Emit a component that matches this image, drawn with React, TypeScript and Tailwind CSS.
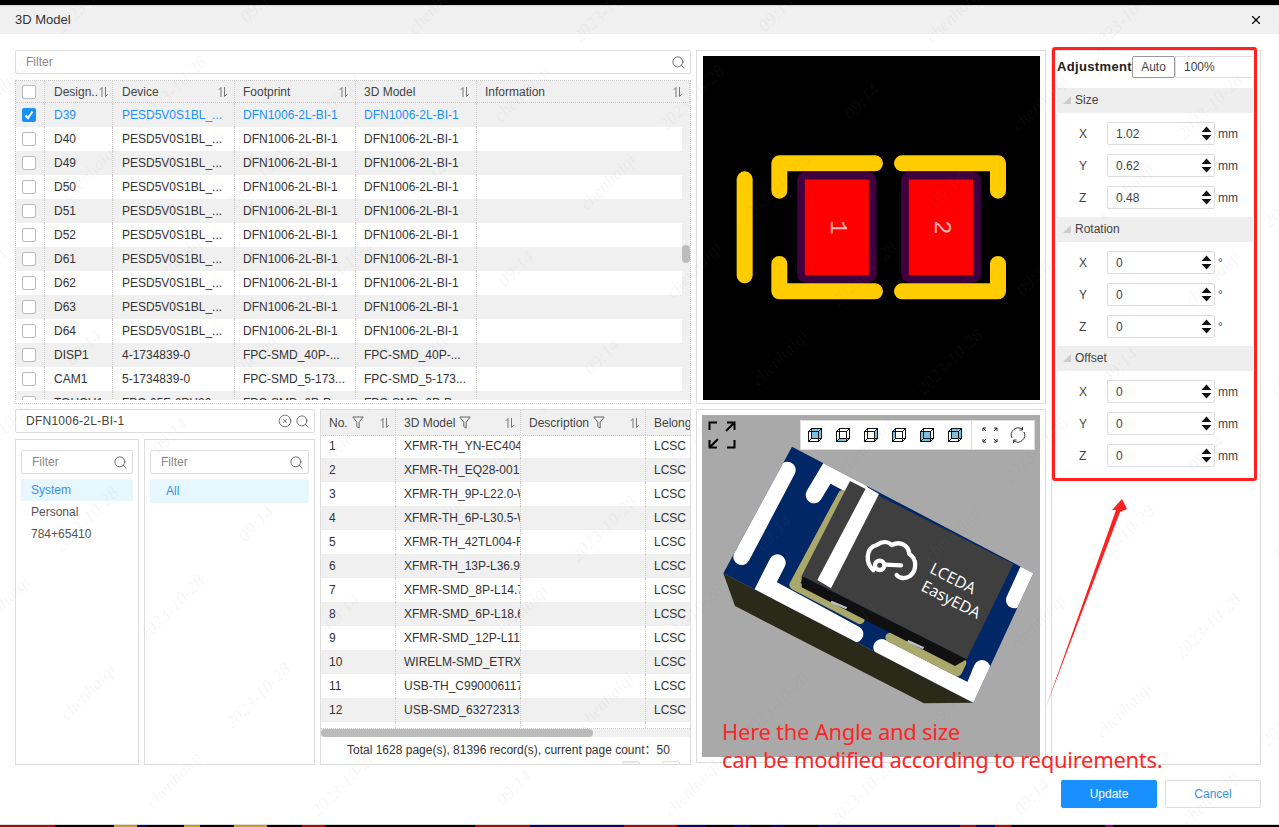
import { Search, X, CircleX } from "lucide-react"

const SYS = "font-['Liberation_Sans','Noto_Sans_CJK_SC',Arial,sans-serif]"

const parts = [
  ["D39", "PESD5V0S1BL_...", "DFN1006-2L-BI-1", "DFN1006-2L-BI-1"],
  ["D40", "PESD5V0S1BL_...", "DFN1006-2L-BI-1", "DFN1006-2L-BI-1"],
  ["D49", "PESD5V0S1BL_...", "DFN1006-2L-BI-1", "DFN1006-2L-BI-1"],
  ["D50", "PESD5V0S1BL_...", "DFN1006-2L-BI-1", "DFN1006-2L-BI-1"],
  ["D51", "PESD5V0S1BL_...", "DFN1006-2L-BI-1", "DFN1006-2L-BI-1"],
  ["D52", "PESD5V0S1BL_...", "DFN1006-2L-BI-1", "DFN1006-2L-BI-1"],
  ["D61", "PESD5V0S1BL_...", "DFN1006-2L-BI-1", "DFN1006-2L-BI-1"],
  ["D62", "PESD5V0S1BL_...", "DFN1006-2L-BI-1", "DFN1006-2L-BI-1"],
  ["D63", "PESD5V0S1BL_...", "DFN1006-2L-BI-1", "DFN1006-2L-BI-1"],
  ["D64", "PESD5V0S1BL_...", "DFN1006-2L-BI-1", "DFN1006-2L-BI-1"],
  ["DISP1", "4-1734839-0", "FPC-SMD_40P-...", "FPC-SMD_40P-..."],
  ["CAM1", "5-1734839-0", "FPC-SMD_5-173...", "FPC-SMD_5-173..."],
  ["TOUCH1", "FPC-05F-6PH20", "FPC-SMD_6P-P...", "FPC-SMD_6P-P..."],
]

const models = [
  "XFMR-TH_YN-EC404",
  "XFMR-TH_EQ28-001",
  "XFMR-TH_9P-L22.0-W",
  "XFMR-TH_6P-L30.5-W",
  "XFMR-TH_42TL004-F",
  "XFMR-TH_13P-L36.9",
  "XFMR-SMD_8P-L14.7",
  "XFMR-SMD_6P-L18.6",
  "XFMR-SMD_12P-L11",
  "WIRELM-SMD_ETRX",
  "USB-TH_C990006117",
  "USB-SMD_63272313",
]

const strip = [
  "w-[55px] bg-[#c00000]",
  "w-[59px] bg-black",
  "w-[23px] bg-[#c9a400]",
  "w-[11px] bg-[#00007a]",
  "w-[36px] bg-black",
  "w-[16px] bg-[#c9a400]",
  "w-[34px] bg-black",
  "w-[33px] bg-[#c9a400]",
  "w-[35px] bg-black",
  "w-[23px] bg-[#c00000]",
  "w-[150px] bg-black",
  "w-[55px] bg-[#c00000]",
  "w-[94px] bg-[#00007a]",
  "w-[53px] bg-[#c00000]",
  "w-[29px] bg-[#00007a]",
  "w-[28px] bg-black",
  "w-[16px] bg-[#00007a]",
  "w-[21px] bg-black",
  "w-[12px] bg-[#00007a]",
  "w-[35px] bg-black",
  "w-[142px] bg-[#00007a]",
  "w-[16px] bg-[#c00000]",
  "w-[19px] bg-[#00007a]",
  "w-[16px] bg-[#c00000]",
  "w-[94px] bg-black",
  "w-[8px] bg-[#7a007a]",
  "flex-1 bg-black",
]

function SortIcon() {
  return (
    <svg width="12" height="12" viewBox="0 0 12 12" className="shrink-0 text-[#777]" fill="none" stroke="currentColor">
      <path d="M4 11V1.5L1.8 3.8" />
      <path d="M7.5 1v9.5l2.2-2.3" />
    </svg>
  )
}

function FunnelIcon() {
  return (
    <svg width="12" height="13" viewBox="0 0 12 13" className="shrink-0 text-[#666]" fill="none" stroke="currentColor">
      <path d="M0.8 1h10.4L7.2 6.2V12L4.8 10.6V6.2z" />
    </svg>
  )
}

function Check({ on }: { on?: boolean }) {
  if (on) {
    return (
      <span className="flex h-[14px] w-[14px] items-center justify-center rounded-[2px] bg-[#1890ff]">
        <svg width="10" height="10" viewBox="0 0 10 10" fill="none" stroke="white" strokeWidth="2">
          <path d="M1.5 5.5l2.4 2.6L8.5 1.5" />
        </svg>
      </span>
    )
  }
  return <span className="block h-[14px] w-[14px] rounded-[2px] border border-[#bbb] bg-white" />
}

function FilterBox() {
  return (
    <div className="flex h-[24px] items-center justify-between rounded-[2px] border border-[#ddd] pl-[10px] pr-[4px] text-[12px] text-[#888]">
      <span>Filter</span>
      <Search size={15} strokeWidth={1.1} className="text-[#333]" />
    </div>
  )
}

function PartsTable() {
  const head = ["Design..", "Device", "Footprint", "3D Model", "Information"]
  const heads = ["w-[68px] pl-[9px]", "w-[122px] pl-[9px]", "w-[121px] pl-[8px]", "w-[121px] pl-[8px]", "flex-1 pl-[8px]"]
  const cols = ["w-[68px] pl-[9px]", "w-[122px] pl-[9px]", "w-[121px] pl-[8px]", "w-[121px] pl-[8px]"]
  return (
    <div className="relative mt-[6px] h-[324px] overflow-hidden border border-dotted border-[#ccc] bg-white">
      <div className="flex h-[22px] border-b border-dotted border-[#ccc] bg-[#f0f0f0]">
        <div className="flex w-[29px] shrink-0 items-center justify-center border-r border-dotted border-[#ccc] pr-[3px]">
          <Check />
        </div>
        {head.map((h, i) => (
          <div key={h} className={`flex ${heads[i]} items-center justify-between border-r border-dotted border-[#ccc] pr-[5px] text-[12px] text-[#444]`}>
            <span>{h}</span>
            <SortIcon />
          </div>
        ))}
      </div>
      <div className="h-[297px] overflow-hidden bg-[#f0f0f0] pr-[8px]">
        {parts.map((row, r) => (
          <div key={row[0]} className={`flex h-[24px] text-[12px] ${r % 2 ? "bg-white" : "bg-[#f0f0f0]"} ${r === 0 ? "text-[#1e90ff]" : "text-[#333]"}`}>
            <div className="flex w-[29px] shrink-0 items-center justify-center border-r border-dotted border-[#ccc] pr-[3px]">
              <Check on={r === 0} />
            </div>
            {row.map((c, i) => (
              <div key={i} className={`flex ${cols[i]} items-center overflow-hidden whitespace-nowrap border-r border-dotted border-[#ccc]`}>
                {c}
              </div>
            ))}
            <div className="flex-1" />
          </div>
        ))}
      </div>
      <div className="absolute right-0 top-[164px] h-[18px] w-[8px] rounded-[4px] bg-[#bdbdbd]" />
    </div>
  )
}

function ModelsTable() {
  const heads: [string, string][] = [
    ["No.", "w-[75px]"],
    ["3D Model", "w-[125px]"],
    ["Description", "w-[125px]"],
  ]
  return (
    <div className="ml-[5px] flex h-full w-[371px] flex-col overflow-hidden border border-[#ddd] bg-white">
      <div className="h-[319px] shrink-0 overflow-hidden border-b border-dotted border-[#ccc]">
        <div className="relative z-10 flex h-[26px] border-b border-dotted border-[#ccc] bg-[#f0f0f0] text-[12px] text-[#444]">
          {heads.map(([h, w]) => (
            <div key={h} className={`flex ${w} shrink-0 items-center border-r border-dotted border-[#ccc] pl-[8px] pr-[4px]`}>
              <span className="mr-[4px]">{h}</span>
              <FunnelIcon />
              <span className="flex-1" />
              <SortIcon />
            </div>
          ))}
          <div className="flex flex-1 items-center overflow-hidden whitespace-nowrap pl-[8px]">Belong</div>
        </div>
        <div className="-mt-[2px]">
          {models.map((m, i) => (
            <div key={m} className={`flex h-[24px] text-[12px] text-[#333] ${i % 2 ? "bg-[#f0f0f0]" : "bg-white"}`}>
              <div className="flex w-[75px] shrink-0 items-center border-r border-dotted border-[#ccc] pl-[8px]">{i + 1}</div>
              <div className="flex w-[125px] shrink-0 items-center overflow-hidden whitespace-nowrap border-r border-dotted border-[#ccc] pl-[8px]">{m}</div>
              <div className="w-[125px] shrink-0 border-r border-dotted border-[#ccc]" />
              <div className="flex flex-1 items-center pl-[8px]">LCSC</div>
            </div>
          ))}
          <div className="flex h-[10px]">
            <div className="w-[75px] border-r border-dotted border-[#ccc]" />
            <div className="w-[125px] border-r border-dotted border-[#ccc]" />
            <div className="w-[125px] border-r border-dotted border-[#ccc]" />
          </div>
        </div>
      </div>
      <div className="h-[8px] shrink-0 bg-[#f0f0f0]">
        <div className="h-full w-[272px] rounded-[4px] bg-[#bbb]" />
      </div>
      <div className="flex h-[24px] shrink-0 items-center pl-[26px] pt-[1px] text-[12px] whitespace-nowrap text-[#333]">
        Total 1628 page(s), 81396 record(s), current page count：50
      </div>
      <div className="flex h-[6px] shrink-0 pl-[301px]">
        <div className="h-[10px] w-[18px] rounded-[2px] border border-[#ddd] bg-[#f0f0f0]" />
        <div className="ml-[22px] h-[10px] w-[18px] rounded-[2px] border border-[#ddd]" />
      </div>
    </div>
  )
}

function LibraryPanel() {
  return (
    <div className="flex h-full w-[300px] flex-col">
      <div className="flex h-[24px] items-center rounded-[2px] border border-[#ddd] pl-[10px] pr-[4px] text-[12px] text-[#444]">
        <span className="flex-1 tracking-[0.25px]">DFN1006-2L-BI-1</span>
        <CircleX size={14} strokeWidth={1.2} className="mr-[3px] text-[#444]" />
        <Search size={15} strokeWidth={1.1} className="text-[#333]" />
      </div>
      <div className="mt-[6px] flex flex-1 gap-[5px]">
        <div className="w-[124px] border border-[#ddd] px-[5px] pt-[10px] text-[12px] text-[#555]">
          <FilterBox />
          <div className="mt-[5px] flex h-[22px] items-center bg-[#e6f7ff] pl-[10px] text-[#3b8ef0]">System</div>
          <div className="flex h-[22px] items-center pl-[10px]">Personal</div>
          <div className="flex h-[22px] items-center pl-[10px]">784+65410</div>
        </div>
        <div className="flex-1 border border-[#ddd] px-[5px] pt-[10px] text-[12px]">
          <FilterBox />
          <div className="mt-[5px] flex h-[24px] items-center bg-[#e6f7ff] pl-[16px] text-[#3b8ef0]">All</div>
        </div>
      </div>
    </div>
  )
}

function PcbView() {
  return (
    <svg viewBox="9 18 1011 1032" className="block h-[344px] w-[337px]">
      <rect x="9" y="18" width="1011" height="1032" fill="#000" />
      <rect x="303" y="377" width="215" height="310" rx="14" fill="#f00" stroke="#3f0040" strokeWidth="23" />
      <rect x="615" y="377" width="216" height="310" rx="14" fill="#f00" stroke="#3f0040" strokeWidth="23" />
      <g fill="none" stroke="#ffcc00" strokeWidth="48" strokeLinecap="round" strokeLinejoin="round">
        <path d="M134 388V676" />
        <path d="M238 422V340H525" />
        <path d="M606 340H894V422" />
        <path d="M238 642V724H525" />
        <path d="M606 724H894V642" />
      </g>
      <g fill="#ffb3b3" fontFamily="'Liberation Mono', monospace" fontSize="72" textAnchor="middle">
        <text transform="translate(394 532) rotate(90)">1</text>
        <text transform="translate(706 532) rotate(90)">2</text>
      </g>
    </svg>
  )
}

function BoardView() {
  return (
    <svg viewBox="6 15 1014 1026" className="block h-[342px] w-[338px]">
      <defs>
        <clipPath id="board-top">
          <polygon points="276,110 1000,490 820,878 70,490" />
        </clipPath>
      </defs>
      <rect x="6" y="15" width="1014" height="1026" fill="#a9a9a9" />
      <polygon points="70,490 820,878 672,880 105,588" fill="#2b2a18" />
      <polygon points="276,110 1000,490 820,878 70,490" fill="#012766" />
      <g clipPath="url(#board-top)" fill="none" stroke="#fff" strokeWidth="50" strokeLinecap="round" strokeLinejoin="miter">
        <path d="M262 180L125 440" />
        <path d="M342 255L382 188L480 240" />
        <path d="M232 458L197 527L465 672" />
        <path d="M545 712L815 850L846 775" />
        <path d="M985 478L943 570" />
      </g>
      <g fill="none" stroke="#aaa86a" strokeWidth="28" strokeLinejoin="round" strokeLinecap="round">
        <path d="M428 254L282 525L480 628" />
        <path d="M570 682L772 785L785 758" />
      </g>
      <polygon points="305,497 800,748 765,768 305,532" fill="#101010" />
      <polygon points="450,213 940,462 800,748 305,497" fill="#3f3f3f" />
      <polygon points="500,230 537,252 393,535 352,510" fill="#fff" />
      <polygon points="395,572 442,592 438,598 391,578" fill="#b8c0d0" />
      <polygon points="625,690 673,712 669,718 621,696" fill="#b8c0d0" />
      <g fill="none" stroke="#fff" strokeWidth="13" strokeLinecap="round" strokeLinejoin="round">
        <circle cx="539" cy="466" r="14" />
        <path d="M555 464L603 466" />
        <path d="M520 480C497 460 495 415 530 405C548 392 565 395 575 405C600 392 625 405 628 432C650 445 652 480 630 498C615 508 598 505 590 495" />
      </g>
      <g fill="#fff" fontFamily="'Open Sans', sans-serif" fontSize="48">
        <text transform="translate(686 487) rotate(27)">LCEDA</text>
        <text transform="translate(660 540) rotate(27)">EasyEDA</text>
      </g>
    </svg>
  )
}

function Cube({ face }: { face: string }) {
  return (
    <svg width="16" height="16" viewBox="0 0 16 16" fill="none" stroke="#111" strokeWidth="1">
      {face === "back" && <rect x="4.5" y="1.5" width="10" height="10" fill="#7cc0e0" stroke="none" />}
      {face === "bottom" && <polygon points="1.5,14.5 11.5,14.5 14.5,11.5 4.5,11.5" fill="#7cc0e0" stroke="none" />}
      {face === "right" && <polygon points="11.5,4.5 14.5,1.5 14.5,11.5 11.5,14.5" fill="#7cc0e0" stroke="none" />}
      {face === "left" && <polygon points="1.5,4.5 4.5,1.5 4.5,11.5 1.5,14.5" fill="#7cc0e0" stroke="none" />}
      {face === "front" && <rect x="1.5" y="4.5" width="10" height="10" fill="#7cc0e0" stroke="none" />}
      <rect x="1.5" y="4.5" width="10" height="10" />
      <rect x="4.5" y="1.5" width="10" height="10" />
      <path d="M1.5 4.5l3-3M11.5 4.5l3-3M11.5 14.5l3-3M1.5 14.5l3-3" />
    </svg>
  )
}

function ViewToolbar() {
  return (
    <div className="absolute right-[10px] top-[10px] flex h-[30px] w-[235px] items-center border border-[#ddd] bg-white pl-[6px]">
      <div className="flex w-[164px] gap-[12px]">
        {["back", "bottom", "right", "left", "front", "back"].map((f, i) => (
          <Cube key={i} face={f} />
        ))}
      </div>
      <div className="h-full w-px bg-[#ddd]" />
      <svg width="16" height="16" viewBox="0 0 16 16" className="ml-[10px]" fill="none" stroke="#222">
        <path d="M1 4V1h3M1 1l3 3M12 1h3v3M15 1l-3 3M1 12v3h3M1 15l3-3M15 12v3h-3M15 15l-3-3" />
      </svg>
      <svg width="18" height="18" viewBox="0 0 18 18" className="ml-[11px]" fill="none" stroke="#333">
        <path d="M3 12A7 7 0 0 1 13 3M15 6a7 7 0 0 1-10 9" />
        <path d="M13.5 1v3h-3M4.500 17v-3h3" />
      </svg>
    </div>
  )
}

function NumberRow({ label, value, unit }: { label: string; value: string; unit: string }) {
  return (
    <div className="mb-[9px] flex h-[23px] items-center text-[12px] text-[#444] last:mb-[8px]">
      <span className="w-[50px] pl-[22px]">{label}</span>
      <div className="flex h-full w-[108px] items-center justify-between rounded-[2px] border border-[#ddd] pl-[8px] pr-[2px]">
        <span>{value}</span>
        <svg width="11" height="15" viewBox="0 0 11 15" fill="#111">
          <path d="M5.500 0.500L10.500 6H0.500z" />
          <path d="M5.500 14.500L0.500 9H10.500z" />
        </svg>
      </div>
      <span className="ml-[3px]">{unit}</span>
    </div>
  )
}

function Section({ title, values, unit }: { title: string; values: string[]; unit: string }) {
  return (
    <div>
      <div className="mb-[9px] flex h-[25px] items-center bg-[#eee] pb-[1px] pl-[6px] text-[12px] text-[#444]">
        <span className="mr-[4px] h-0 w-0 border-b-[8px] border-l-[8px] border-b-[#ccc] border-l-transparent" />
        {title}
      </div>
      {["X", "Y", "Z"].map((l, i) => (
        <NumberRow key={l} label={l} value={values[i]} unit={unit} />
      ))}
    </div>
  )
}

function AdjustPanel() {
  return (
    <div className="h-full w-[210px] border border-[#ddd] pl-[5px] pr-[7px] pt-[5px]">
      <div className="mb-[10px] flex h-[22px] items-center text-[12px] text-[#444]">
        <span className="w-[75px] text-[13px] font-bold tracking-[0.35px] whitespace-nowrap text-[#222]">Adjustment</span>
        <span className="flex h-full w-[43px] items-center justify-center rounded-[2px] border border-[#999]">Auto</span>
        <span className="flex h-full flex-1 items-center border-y border-l border-[#ddd] pl-[8px]">100%</span>
      </div>
      <Section title="Size" values={["1.02", "0.62", "0.48"]} unit="mm" />
      <Section title="Rotation" values={["0", "0", "0"]} unit="°" />
      <Section title="Offset" values={["0", "0", "0"]} unit="mm" />
    </div>
  )
}

function Watermarks() {
  const words = ["chenhaiqi", "2023-10-28", "09:14"]
  const marks: { x: number; y: number; t: string }[] = []
  for (let i = -8; i < 9; i++) {
    for (let j = -2; j < 5; j++) {
      words.forEach((t, k) => {
        const x = 780 + 86 * i + 260 * j + 84 * k
        const y = 358 + 88 * i - 255 * j - 84 * k
        if (x > -40 && x < 1320 && y > 0 && y < 827) marks.push({ x, y, t })
      })
    }
  }
  return (
    <div className="pointer-events-none absolute inset-0 overflow-hidden">
      {marks.map((m, i) => (
        <span
          key={i}
          className="absolute -translate-x-1/2 -translate-y-1/2 -rotate-45 font-['Liberation_Serif',serif] text-[18px] whitespace-nowrap text-[#80808014] italic"
          style={{ left: m.x, top: m.y }}
        >
          {m.t}
        </span>
      ))}
    </div>
  )
}

export default function App() {
  return (
    <div className={`relative flex h-[827px] w-[1279px] flex-col overflow-hidden bg-black ${SYS}`}>
      <div className="mt-[5px] flex h-[820px] shrink-0 flex-col border-y border-[#d8d8d8] bg-white">
        <div className="flex h-[28px] shrink-0 items-center justify-between bg-[#f0f0f0] pl-[15px] pr-[16px] text-[13px] text-[#333]">
          <span>3D Model</span>
          <X size={14} strokeWidth={2} className="text-black" />
        </div>
        <div className="flex-1 pl-[15px] pr-[18px] pt-[16px]">
          <div className="flex h-[715px] gap-[5px]">
            <div className="w-[676px]">
              <FilterBox />
              <PartsTable />
              <div className="mt-[5px] flex h-[356px]">
                <LibraryPanel />
                <ModelsTable />
              </div>
            </div>
            <div className="flex w-[350px] flex-col gap-[5px]">
              <div className="h-[354px] border border-[#ddd] pl-[6px] pt-[5px]">
                <PcbView />
              </div>
              <div className="relative h-[354px] border border-[#ddd] pl-[5px] pt-[5px]">
                <BoardView />
                <ViewToolbar />
                <svg width="28" height="28" viewBox="0 0 28 28" className="absolute left-[11px] top-[11px]" fill="none" stroke="#000" strokeWidth="2">
                  <path d="M9 1.500H1.500V9M26.500 19V26.500H19M19 1.500H26.500V9M26.500 1.500L18 10M1.500 19V26.500H9M1.500 26.500L10 18" />
                </svg>
              </div>
            </div>
            <AdjustPanel />
          </div>
          <div className="mt-[15px] flex justify-end gap-[8px] text-[12px]">
            <button className="h-[28px] w-[96px] rounded-[2px] bg-[#1890ff] text-white">Update</button>
            <button className="h-[28px] w-[96px] rounded-[2px] border border-[#ddd] text-[#3b8ef0]">Cancel</button>
          </div>
        </div>
      </div>
      <div className="flex h-[2px] w-full shrink-0">
        {strip.map((c, i) => (
          <div key={i} className={c} />
        ))}
      </div>
      <Watermarks />
      {/* red notes drawn on top of the screenshot */}
      <div className="pointer-events-none absolute left-[1052px] top-[47px] h-[434px] w-[205px] rounded-[3px] border-[3px] border-[#ff2020]" />
      <svg width="100" height="230" viewBox="1040 490 100 230" className="pointer-events-none absolute left-[1040px] top-[490px]">
        <polygon points="1046,707 1116,510 1112,510 1122,499 1127,509 1120,512" fill="#ff2020" />
      </svg>
      <div className="pointer-events-none absolute left-[722px] top-[717px] font-['Noto_Sans',sans-serif] text-[22px] leading-[28px] tracking-[-0.28px] whitespace-nowrap text-[#ff2525]">
        <div>Here the Angle and size</div>
        <div>can be modified according to requirements.</div>
      </div>
    </div>
  )
}
